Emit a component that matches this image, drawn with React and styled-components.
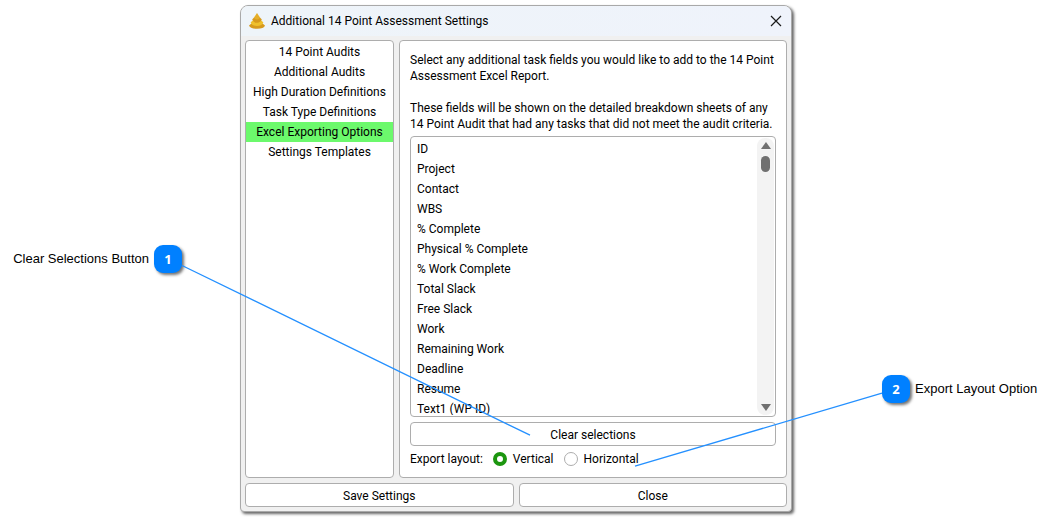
import React, { useState } from 'react';
import styled, { createGlobalStyle } from 'styled-components';

const sections = [
  '14 Point Audits',
  'Additional Audits',
  'High Duration Definitions',
  'Task Type Definitions',
  'Excel Exporting Options',
  'Settings Templates',
];

const fields = [
  'ID',
  'Project',
  'Contact',
  'WBS',
  '% Complete',
  'Physical % Complete',
  '% Work Complete',
  'Total Slack',
  'Free Slack',
  'Work',
  'Remaining Work',
  'Deadline',
  'Resume',
  'Text1 (WP ID)',
];

function App() {
  const [section, setSection] = useState('Excel Exporting Options');
  const [selected, setSelected] = useState([]);
  const [layout, setLayout] = useState('vertical');

  const toggleField = (field) => {
    setSelected((prev) =>
      prev.includes(field) ? prev.filter((f) => f !== field) : [...prev, field]
    );
  };

  return (
    <Page>
      <GlobalStyle />
      <LeftNotes>
        <Callout>
          Clear Selections Button
          <Badge>1</Badge>
        </Callout>
      </LeftNotes>

      <Dialog role="dialog" aria-labelledby="dialog-title">
        <TitleBar>
          <Logo />
          <Title id="dialog-title">Additional 14 Point Assessment Settings</Title>
          <CloseIcon type="button" aria-label="Close window">
            <svg width="12" height="12" viewBox="0 0 12 12">
              <path d="M1 1L11 11M11 1L1 11" stroke="#1a1a1a" strokeWidth="1.2" />
            </svg>
          </CloseIcon>
        </TitleBar>

        <Body>
          <Sidebar>
            {sections.map((name) => (
              <SectionButton
                key={name}
                type="button"
                $active={name === section}
                onClick={() => setSection(name)}
              >
                {name}
              </SectionButton>
            ))}
          </Sidebar>

          <Panel>
            <Description>
              Select any additional task fields you would like to add to the 14 Point
              <br />
              Assessment Excel Report.
            </Description>
            <Description>
              These fields will be shown on the detailed breakdown sheets of any
              <br />
              14 Point Audit that had any tasks that did not meet the audit criteria.
            </Description>

            <ListBox>
              <FieldList role="listbox" aria-label="Task fields" aria-multiselectable="true">
                {fields.map((field) => (
                  <Field
                    key={field}
                    role="option"
                    aria-selected={selected.includes(field)}
                    $selected={selected.includes(field)}
                    onClick={() => toggleField(field)}
                  >
                    {field}
                  </Field>
                ))}
              </FieldList>
              <ScrollTrack>
                <Arrow />
                <Thumb />
                <Arrow $down />
              </ScrollTrack>
            </ListBox>

            <Button type="button" onClick={() => setSelected([])}>
              Clear selections
            </Button>

            <LayoutRow role="radiogroup" aria-labelledby="layout-label">
              <span id="layout-label">Export layout:</span>
              <RadioLabel>
                <Radio
                  name="layout"
                  checked={layout === 'vertical'}
                  onChange={() => setLayout('vertical')}
                />
                Vertical
              </RadioLabel>
              <RadioLabel>
                <Radio
                  name="layout"
                  checked={layout === 'horizontal'}
                  onChange={() => setLayout('horizontal')}
                />
                Horizontal
              </RadioLabel>
            </LayoutRow>
          </Panel>
        </Body>

        <Footer>
          <Button type="button">Save Settings</Button>
          <Button type="button">Close</Button>
        </Footer>
      </Dialog>

      <RightNotes>
        <Callout>
          <Badge>2</Badge>
          Export Layout Option
        </Callout>
      </RightNotes>

      <Connectors viewBox="0 0 1054 521" preserveAspectRatio="none" aria-hidden="true">
        <path d="M182 266L530 436M882 394L635 467" />
      </Connectors>
    </Page>
  );
}

// gold cone of four stacked tiers
function Logo() {
  return (
    <svg width="16" height="16" viewBox="0 0 16 16" aria-hidden="true">
      <path d="M0 12.4L2.4 10.4H13.6L16 12.4Q15 15.6 8 15.8Q1 15.6 0 12.4Z" fill="#d79a1e" />
      <path d="M1.6 9.4L3.6 7.4H12.4L14.4 9.4Q13 12.8 8 13Q3 12.8 1.6 9.4Z" fill="#efc02c" />
      <path d="M3.2 6.6L5 4.6H11L12.8 6.6Q11.6 9.6 8 9.8Q4.4 9.6 3.2 6.6Z" fill="#d79a1e" />
      <path d="M8 0L11 4.4Q10 6.4 8 6.4Q6 6.4 5 4.4Z" fill="#e5ae28" />
    </svg>
  );
}

export default App;

const GlobalStyle = createGlobalStyle`
  * {
    box-sizing: border-box;
  }

  body {
    margin: 0;
    background: #fff;
    color: #000;
    font-family: Roboto, 'Open Sans', sans-serif;
    font-size: 12px;
    line-height: 16px;
  }

  button {
    font: inherit;
    color: inherit;
  }
`;

const Page = styled.main`
  position: relative;
  display: grid;
  grid-template-columns: 240fr 552fr 262fr;
  align-items: start;
  padding: 5px 0 8px;
`;

const LeftNotes = styled.aside`
  display: flex;
  justify-content: flex-end;
  padding: 240px 58px 0 0;
`;

const RightNotes = styled.aside`
  padding: 370px 0 0 90px;
`;

const Callout = styled.div`
  display: flex;
  align-items: center;
  gap: 5px;
  font-family: 'Liberation Sans', Arial, sans-serif;
  font-size: 13px;
  line-height: 18px;
  white-space: nowrap;
`;

const Badge = styled.span`
  display: flex;
  align-items: center;
  justify-content: center;
  width: 28px;
  height: 28px;
  border-radius: 9px;
  background: #0080ff;
  box-shadow: 2px 2px 3px rgba(0, 0, 0, 0.55);
  color: #fff;
  font-family: 'Open Sans', sans-serif;
  font-weight: 700;
`;

const Connectors = styled.svg`
  position: absolute;
  top: 0;
  left: 0;
  width: 100%;
  height: 100%;
  pointer-events: none;

  path {
    fill: none;
    stroke: #2490ff;
    stroke-width: 1.3;
  }
`;

const Dialog = styled.section`
  border: 1px solid #a9a9a9;
  border-radius: 8px 8px 4px 4px;
  background: #f0f0f0;
  box-shadow: 2px 2px 3px rgba(0, 0, 0, 0.6);
  overflow: hidden;
`;

const TitleBar = styled.header`
  display: flex;
  align-items: center;
  gap: 6px;
  height: 30px;
  padding: 0 9px 0 8px;
  background: linear-gradient(90deg, #eef4f9, #eff3fb);
`;

const Title = styled.h1`
  flex: 1;
  margin: 0;
  font-size: 12px;
  font-weight: 400;
`;

const CloseIcon = styled.button`
  display: flex;
  padding: 0;
  border: none;
  background: none;
`;

const Body = styled.div`
  display: grid;
  grid-template-columns: 149px minmax(0, 1fr);
  gap: 5px;
  padding: 4px 4px 5px;
`;

const Sidebar = styled.nav`
  padding: 1px 0;
  border: 1px solid #adadad;
  border-radius: 4px;
  background: #fff;
`;

const SectionButton = styled.button`
  display: block;
  width: 100%;
  height: 20px;
  padding: 0;
  border: none;
  background: ${(props) => (props.$active ? '#6cf96c' : 'transparent')};
  text-align: center;
  white-space: nowrap;
`;

const Panel = styled.div`
  display: flex;
  flex-direction: column;
  padding: 11px 10px 10px;
  border: 1px solid #adadad;
  border-radius: 4px;
  background: #fff;
`;

const Description = styled.p`
  margin: 0;
  white-space: nowrap;

  & + & {
    margin: 16px 0 4px;
  }
`;

const ListBox = styled.div`
  display: flex;
  height: 281px;
  margin-bottom: 5px;
  padding: 1px;
  border: 1px solid #adadad;
  border-radius: 4px;
`;

const FieldList = styled.ul`
  flex: 1;
  margin: 0;
  padding: 1px 0 0;
  list-style: none;
  overflow: hidden;
`;

const Field = styled.li`
  padding-left: 5px;
  background: ${(props) => (props.$selected ? '#cce8ff' : 'transparent')};
  line-height: 20px;
`;

const ScrollTrack = styled.div`
  display: flex;
  flex-direction: column;
  align-items: center;
  width: 17px;
  padding: 4px 0;
  border-radius: 8px;
  background: #f3f3f3;
`;

const Arrow = styled.span`
  margin-top: ${(props) => (props.$down ? 'auto' : '0')};
  border: solid transparent;
  border-width: ${(props) => (props.$down ? '7px 5px 0' : '0 5px 7px')};
  border-top-color: ${(props) => (props.$down ? '#707070' : 'transparent')};
  border-bottom-color: ${(props) => (props.$down ? 'transparent' : '#707070')};
`;

const Thumb = styled.span`
  width: 9px;
  height: 16px;
  margin-top: 7px;
  border-radius: 5px;
  background: #707070;
`;

const Button = styled.button`
  height: 24px;
  padding: 2px 0 0;
  border: 1px solid #adadad;
  border-radius: 4px;
  background: #fff;

  &:hover {
    border-color: #707070;
  }
`;

const LayoutRow = styled.div`
  display: flex;
  align-items: center;
  gap: 10px;
  margin-top: 5px;
`;

const RadioLabel = styled.label`
  display: flex;
  align-items: center;
  gap: 6px;
`;

const Radio = styled.input.attrs({ type: 'radio' })`
  appearance: none;
  width: 14px;
  height: 14px;
  margin: 0;
  border: 1px solid #adadad;
  border-radius: 50%;
  background: #fff;

  &:checked {
    border: 4px solid #1c960f;
  }
`;

const Footer = styled.footer`
  display: grid;
  grid-template-columns: 1fr 1fr;
  gap: 5px;
  padding: 0 4px 4px;
`;
